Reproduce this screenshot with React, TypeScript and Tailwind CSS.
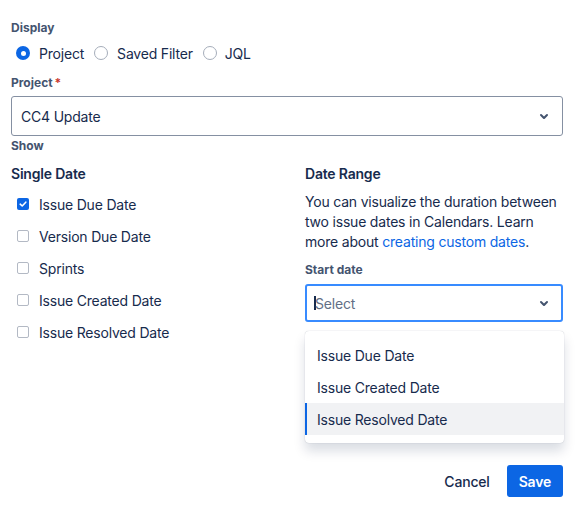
import React from "react";

const Chevron = () => (
  <svg width="24" height="24" viewBox="0 0 24 24" className="shrink-0">
    <path
      fill="#44546F"
      d="M8.292 10.293a1.01 1.01 0 000 1.419l2.939 2.965c.218.215.5.322.779.322s.556-.107.769-.322l2.93-2.955a1.01 1.01 0 000-1.419.987.987 0 00-1.406 0l-2.298 2.317-2.307-2.327a.99.99 0 00-1.406 0z"
    />
  </svg>
);

const Radio = ({ checked }: { checked?: boolean }) =>
  checked ? (
    <span className="block w-[14px] h-[14px] rounded-full bg-[#0C66E4] flex items-center justify-center shrink-0">
      <span className="block w-[5px] h-[5px] rounded-full bg-white" />
    </span>
  ) : (
    <span className="block w-[14px] h-[14px] rounded-full border border-[#A5ADBA] bg-white shrink-0" />
  );

const Checkbox = ({ checked }: { checked?: boolean }) =>
  checked ? (
    <span className="block w-[12px] h-[12px] rounded-[2px] bg-[#0C66E4] flex items-center justify-center shrink-0">
      <svg width="10" height="10" viewBox="0 0 10 10">
        <path d="M2.2 5.2 L4.2 7 L7.8 3.2" fill="none" stroke="white" strokeWidth="1.6" strokeLinecap="round" strokeLinejoin="round" />
      </svg>
    </span>
  ) : (
    <span className="block w-[12px] h-[12px] rounded-[2px] border border-[#B3B9C4] bg-white shrink-0" />
  );

const singleDates = [
  { label: "Issue Due Date", checked: true },
  { label: "Version Due Date" },
  { label: "Sprints" },
  { label: "Issue Created Date" },
  { label: "Issue Resolved Date" },
];

export default function App() {
  return (
    <div className="relative w-[587px] h-[511px] bg-white pl-[11px] pr-[24px] pt-[20px] font-[family-name:Inter,sans-serif] tracking-[-0.2px] text-[#172B4D]">
      <div className="text-[12px] leading-[16px] font-bold text-[#44546F] tracking-[0px]">Display</div>
      <div className="mt-[5px] h-[24px] flex items-center text-[14px]">
        <span className="ml-[5px] flex"><Radio checked /></span>
        <span className="ml-[9px]">Project</span>
        <span className="ml-[10px] flex"><Radio /></span>
        <span className="ml-[9px]">Saved Filter</span>
        <span className="ml-[10px] flex"><Radio /></span>
        <span className="ml-[8px]">JQL</span>
      </div>
      <div className="mt-[10px] text-[12px] leading-[16px] font-bold text-[#44546F] tracking-[0px] flex">
        Project<span className="text-[#C9372C] ml-[2px]">*</span>
      </div>
      <div className="mt-[5px] h-[40px] border border-[#8590A2] rounded-[3px] flex items-center justify-between pl-[9px] pr-[6px]">
        <span className="text-[14px]">CC4 Update</span>
        <Chevron />
      </div>
      <div className="mt-[2px] text-[12px] leading-[16px] font-bold text-[#44546F] tracking-[0px]">Show</div>
      <div className="mt-[10px] grid grid-cols-[294px_1fr]">
        <div>
          <div className="text-[14px] leading-[20px] font-semibold">Single Date</div>
          <div className="mt-[4px] flex flex-col">
            {singleDates.map((d) => (
              <div key={d.label} className="h-[32px] flex items-center text-[14px]">
                <span className="ml-[6px] flex"><Checkbox checked={d.checked} /></span>
                <span className="ml-[10px]">{d.label}</span>
              </div>
            ))}
          </div>
        </div>
        <div>
          <div className="text-[14px] leading-[20px] font-semibold">Date Range</div>
          <p className="mt-[8px] text-[14px] leading-[20px]">
            You can visualize the duration between two issue dates in Calendars. Learn more about{" "}
            <span className="text-[#0C66E4]">creating custom dates</span>.
          </p>
          <div className="mt-[10px] text-[12px] leading-[16px] font-bold text-[#44546F] tracking-[0px]">Start date</div>
          <div className="relative mt-[6px]">
            <div className="h-[38px] border-2 border-[#388BFF] rounded-[3px] flex items-center justify-between pl-[7px] pr-[5px]">
              <span className="flex items-center text-[14px] text-[#626F86]">
                <span className="block w-[2px] h-[14px] bg-[#172B4D] mr-[-1px]" />
                Select
              </span>
              <Chevron />
            </div>
            <div className="absolute left-0 right-[-1px] top-[calc(100%+9px)] bg-white rounded-[4px] py-[8px] shadow-[0_8px_12px_rgba(9,30,66,0.15),0_0_1px_rgba(9,30,66,0.31)]">
              <div className="h-[32px] flex items-center pl-[12px] text-[14px]">Issue Due Date</div>
              <div className="h-[32px] flex items-center pl-[12px] text-[14px]">Issue Created Date</div>
              <div className="h-[32px] flex items-center pl-[10px] text-[14px] bg-[#F1F2F4] border-l-2 border-[#0C66E4]">
                Issue Resolved Date
              </div>
            </div>
          </div>
        </div>
      </div>
      <div className="mt-[117px] flex justify-end items-center gap-[5px]">
        <button className="h-[32px] px-[12px] rounded-[3px] text-[14px] font-medium text-[#172B4D]">Cancel</button>
        <button className="h-[32px] px-[12px] rounded-[3px] text-[14px] font-semibold text-white bg-[#0C66E4]">Save</button>
      </div>
    </div>
  );
}
